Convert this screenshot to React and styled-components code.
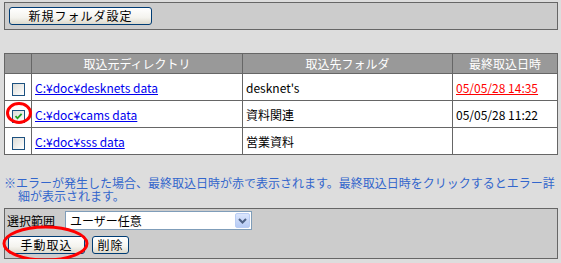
import React, { useState } from 'react';
import styled, { createGlobalStyle } from 'styled-components';

const GlobalStyle = createGlobalStyle`
  body {
    margin: 0;
    background: #dddddd;
    font-family: 'Noto Sans CJK JP', 'Noto Sans', sans-serif;
    font-size: 12px;
    color: #000;
  }
`;

const Page = styled.div`
  position: relative;
  width: 554px;
  padding: 2px 3px 0 4px;
`;

const Panel = styled.div`
  border: 1px solid #666666;
  background: #cccccc;
  padding: ${p => p.$pad || '4px 4px 4px'};
`;

const Button = styled.button`
  font-family: inherit;
  font-size: 12px;
  line-height: 1;
  height: ${p => p.$h || 18}px;
  width: ${p => p.$w}px;
  padding: 0;
  border: 1px solid #003c74;
  border-radius: 3px;
  background: linear-gradient(#ffffff 0%, #f4f3ee 60%, #dcd9cc 100%);
  color: #000;
  display: flex;
  align-items: center;
  justify-content: center;
  letter-spacing: 1px;
`;

const Table = styled.table`
  margin-top: 23px;
  width: 554px;
  border-collapse: collapse;
  background: #ffffff;
  border: 1px solid #666666;
`;

const Th = styled.th`
  background: #999999;
  color: #ffffff;
  font-weight: normal;
  height: 19px;
  padding: 0;
  border: 1px solid #666666;
  width: ${p => p.$w ? p.$w + 'px' : 'auto'};
`;

const Td = styled.td`
  height: 26px;
  padding: 0 0 0 3px;
  border: 1px solid #666666;
  white-space: nowrap;
  ${p => p.$center && 'text-align: center; padding: 0;'}
`;

const Link = styled.a`
  color: ${p => p.$red ? '#ff0000' : '#0000ee'};
  text-decoration: underline;
  cursor: pointer;
`;

const Check = styled.span`
  display: inline-block;
  vertical-align: middle;
  width: 11px;
  height: 11px;
  border: 1px solid #1c5180;
  background: linear-gradient(135deg, #dcdcd7 0%, #ffffff 100%);
  position: relative;
  margin-top: 2px;

  svg {
    position: absolute;
    left: 1px;
    top: 1px;
  }
`;

const Note = styled.p`
  margin: 21px 0 6px;
  padding-left: 14px;
  text-indent: -14px;
  color: #3366cc;
  line-height: 13px;
`;

const Row = styled.div`
  display: flex;
  align-items: center;
  gap: ${p => p.$gap || 0}px;
  margin-top: ${p => p.$mt || 0}px;
`;

const Label = styled.span`
  padding-left: 0;
`;

const Select = styled.div`
  width: 181px;
  height: 17px;
  border: 1px solid #7f9db9;
  background: #ffffff;
  display: flex;
  align-items: center;
  justify-content: space-between;
  padding-left: 4px;
  box-sizing: content-box;
  font-size: 12px;
`;

const Arrow = styled.span`
  width: 15px;
  height: 15px;
  margin-right: 1px;
  border-radius: 2px;
  background: linear-gradient(#dbe6fd, #b6cbf5);
  border: 1px solid #b9cdf4;
  display: flex;
  align-items: center;
  justify-content: center;
  box-sizing: border-box;
`;

const Marks = styled.svg`
  position: absolute;
  left: 0;
  top: 0;
  pointer-events: none;
`;

const rows = [
  { dir: 'C:¥doc¥desknets data', folder: "desknet's", date: '05/05/28 14:35', error: true, checked: false },
  { dir: 'C:¥doc¥cams data', folder: '資料関連', date: '05/05/28 11:22', error: false, checked: true },
  { dir: 'C:¥doc¥sss data', folder: '営業資料', date: '', error: false, checked: false },
];

export default function App() {
  const [checked, setChecked] = useState(rows.map(r => r.checked));

  return (
    <>
      <GlobalStyle />
      <Page>
        <Panel>
          <Button $w={143}>新規フォルダ設定</Button>
        </Panel>

        <Table>
          <thead>
            <tr>
              <Th $w={26} />
              <Th $w={210}>取込元ディレクトリ</Th>
              <Th $w={209}>取込先フォルダ</Th>
              <Th>最終取込日時</Th>
            </tr>
          </thead>
          <tbody>
            {rows.map((r, i) => (
              <tr key={i}>
                <Td $center>
                  <Check onClick={() => setChecked(c => c.map((v, j) => (j === i ? !v : v)))}>
                    {checked[i] && (
                      <svg width="9" height="9" viewBox="0 0 9 9">
                        <path d="M1.5 4.2 L3.5 6.3 L7.6 1.8" fill="none" stroke="#21a121" strokeWidth="1.8" />
                      </svg>
                    )}
                  </Check>
                </Td>
                <Td><Link>{r.dir}</Link></Td>
                <Td>{r.folder}</Td>
                <Td>{r.error ? <Link $red>{r.date}</Link> : r.date}</Td>
              </tr>
            ))}
          </tbody>
        </Table>

        <Note>※エラーが発生した場合、最終取込日時が赤で表示されます。最終取込日時をクリックするとエラー詳細が表示されます。</Note>

        <Panel $pad="2px 4px 4px 2px">
          <Row $gap={10}>
            <Label>選択範囲</Label>
            <Select>
              ユーザー任意
              <Arrow>
                <svg width="9" height="6" viewBox="0 0 9 6">
                  <path d="M1 1 L4.5 4.5 L8 1" fill="none" stroke="#4d6185" strokeWidth="2" />
                </svg>
              </Arrow>
            </Select>
          </Row>
          <Row $gap={7} $mt={6}>
            <Button $w={77} $h={18} style={{ marginLeft: 1 }}>手動取込</Button>
            <Button $w={37} $h={18}>削除</Button>
          </Row>
        </Panel>

        <Marks width="561" height="263">
          <ellipse cx="19" cy="113" rx="11.5" ry="9.5" fill="none" stroke="#ff0000" strokeWidth="3" />
          <ellipse cx="45.5" cy="243.5" rx="41.5" ry="16.5" fill="none" stroke="#ff0000" strokeWidth="3" />
        </Marks>
      </Page>
    </>
  );
}
